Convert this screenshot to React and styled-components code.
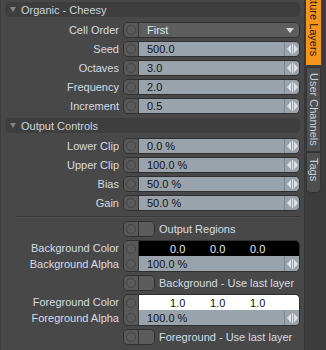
import React from "react";
import styled, { createGlobalStyle } from "styled-components";

const Global = createGlobalStyle`
  html, body { margin: 0; padding: 0; background: #3c3c3c; }
  body { font-family: "Liberation Sans", Arial, sans-serif; font-size: 11px; }
  * { box-sizing: border-box; }
`;

const Root = styled.div`
  display: flex;
  width: 326px;
  height: 350px;
  overflow: hidden;
  background: #3c3c3c;
`;

const Panel = styled.div`
  width: 305px;
  height: 350px;
  flex: none;
  background: #484848;
  border-left: 1px solid #3d3d3d;
  border-right: 1px solid #363636;
  padding: 2px 4px 0 4px;
  display: flex;
  flex-direction: column;
`;

const Header = styled.div`
  height: 15px;
  border-radius: 5px;
  background: #3e3e3e;
  display: flex;
  align-items: center;
  gap: 5px;
  padding-left: 5px;
  color: #cbd5df;
  margin-top: ${(p) => p.$mt || 0}px;
  margin-bottom: 5px;
  flex: none;
`;

const Caret = styled.span`
  width: 0;
  height: 0;
  border-left: 3px solid transparent;
  border-right: 3px solid transparent;
  border-top: 5px solid #858585;
`;

const Row = styled.div`
  display: grid;
  grid-template-columns: 114px 1fr;
  column-gap: 4px;
  height: 16px;
  align-items: center;
  margin-bottom: 3px;
  flex: none;
`;

const PairRow = styled.div`
  display: grid;
  grid-template-columns: 114px 1fr;
  grid-template-rows: 16px 16px;
  column-gap: 4px;
  align-items: center;
  margin-bottom: 3px;
  flex: none;
`;

const Label = styled.div`
  grid-column: 1;
  text-align: right;
  color: #d5dce4;
  white-space: nowrap;
  line-height: 16px;
`;

const Control = styled.div`
  display: flex;
  height: 16px;
  border: 1px solid #2f2f2f;
  border-radius: 5px;
  overflow: hidden;
`;

const Cap = styled.div`
  width: 15px;
  flex: none;
  background: #585858;
  border-right: 1px solid #343434;
  display: flex;
  flex-direction: column;
  align-items: center;
  justify-content: space-around;
`;

const Radio = styled.span`
  width: 10px;
  height: 10px;
  border-radius: 50%;
  border: 1px solid #454545;
  background: #5a5a5a;
`;

const Field = styled.div`
  flex: 1;
  display: flex;
  align-items: center;
  padding-left: 8px;
  background: ${(p) => p.$bg || "#99a3ac"};
  color: ${(p) => p.$fg || "#141414"};
  white-space: nowrap;
`;

const Spin = styled.div`
  width: 15px;
  flex: none;
  display: flex;
  align-items: center;
  justify-content: center;
  background: #99a3ac;
  border-left: 1px solid #7d8790;
`;

const Arrow = styled.span`
  margin-left: auto;
  margin-right: 5px;
  width: 0;
  height: 0;
  border-left: 4px solid transparent;
  border-right: 4px solid transparent;
  border-top: 5px solid #d8d8d8;
`;

const PairControl = styled.div`
  grid-column: 2;
  grid-row: 1 / span 2;
  height: 32px;
  display: grid;
  grid-template-columns: 15px 1fr;
  grid-template-rows: 15px 15px;
  border: 1px solid #2f2f2f;
  border-radius: 5px;
  overflow: hidden;
`;

const PairCap = styled(Cap)`
  grid-row: 1 / span 2;
`;

const ColorField = styled.div`
  display: flex;
  align-items: center;
  padding-left: 31px;
  background: ${(p) => p.$bg};
  color: ${(p) => p.$fg};
`;

const ColorVal = styled.span`
  width: 40px;
  flex: none;
`;

const AlphaField = styled.div`
  display: flex;
`;

const Separator = styled.div`
  height: 1px;
  margin: 2px 0 4px 11px;
  background: #393939;
  box-shadow: 0 1px 0 #505050;
  flex: none;
`;

const ToggleWrap = styled.div`
  grid-column: 2;
  display: flex;
  align-items: center;
  gap: 4px;
  color: #d5dce4;
  white-space: nowrap;
`;

const Toggle = styled.div`
  width: 32px;
  height: 16px;
  display: flex;
  border: 1px solid #2f2f2f;
  border-radius: 5px;
  overflow: hidden;
  flex: none;
`;

const ToggleHalf = styled.div`
  flex: 1;
  background: #5c5c5c;
`;

const TabStrip = styled.div`
  width: 21px;
  flex: none;
  display: flex;
  flex-direction: column;
  padding-left: 1px;
  background: #3c3c3c;
`;

const Tab = styled.div`
  width: 15px;
  height: ${(p) => p.$h}px;
  margin-top: ${(p) => p.$mt || 0}px;
  flex: none;
  display: flex;
  flex-direction: column;
  align-items: center;
  justify-content: ${(p) => (p.$end ? "flex-end" : "flex-start")};
  padding: ${(p) => (p.$end ? "0 0 9px 0" : "5px 0 0 0")};
  overflow: hidden;
  background: ${(p) => (p.$active ? "#f5951c" : "#4f4f4f")};
  color: ${(p) => (p.$active ? "#231a10" : "#c5d0dc")};
  border: ${(p) => (p.$active ? "none" : "1px solid #343434")};
  border-radius: ${(p) => (p.$last ? "0 0 5px 5px" : "0")};
`;

const TabText = styled.span`
  writing-mode: vertical-rl;
  white-space: nowrap;
  font-size: 11px;
  flex: none;
`;

const SpinIcon = () => (
  <svg width="11" height="10" viewBox="0 0 11 10">
    <polygon points="4,0.5 4,9.5 0,5" fill="#dfe3e7" />
    <rect x="5" y="0" width="1" height="10" fill="#dfe3e7" />
    <polygon points="7,0.5 7,9.5 11,5" fill="#dfe3e7" />
  </svg>
);

const NumRow = ({ label, value }) => (
  <Row>
    <Label>{label}</Label>
    <Control>
      <Cap>
        <Radio />
      </Cap>
      <Field>{value}</Field>
      <Spin>
        <SpinIcon />
      </Spin>
    </Control>
  </Row>
);

const ToggleRow = ({ label }) => (
  <Row>
    <ToggleWrap>
      <Toggle>
        <Cap>
          <Radio />
        </Cap>
        <ToggleHalf />
      </Toggle>
      {label}
    </ToggleWrap>
  </Row>
);

const ColorPair = ({ prefix, bg, fg, val }) => (
  <PairRow>
    <Label>{prefix} Color</Label>
    <Label>{prefix} Alpha</Label>
    <PairControl>
      <PairCap>
        <Radio />
        <Radio />
      </PairCap>
      <ColorField $bg={bg} $fg={fg}>
        <ColorVal>{val}</ColorVal>
        <ColorVal>{val}</ColorVal>
        <ColorVal>{val}</ColorVal>
      </ColorField>
      <AlphaField>
        <Field>100.0 %</Field>
        <Spin>
          <SpinIcon />
        </Spin>
      </AlphaField>
    </PairControl>
  </PairRow>
);

export default function App() {
  return (
    <Root>
      <Global />
      <Panel>
        <Header>
          <Caret />
          Organic - Cheesy
        </Header>
        <Row>
          <Label>Cell Order</Label>
          <Control>
            <Cap>
              <Radio />
            </Cap>
            <Field $bg="#5d5d5d" $fg="#dde3ea">
              First
              <Arrow />
            </Field>
          </Control>
        </Row>
        <NumRow label="Seed" value="500.0" />
        <NumRow label="Octaves" value="3.0" />
        <NumRow label="Frequency" value="2.0" />
        <NumRow label="Increment" value="0.5" />
        <Header $mt={1}>
          <Caret />
          Output Controls
        </Header>
        <NumRow label="Lower Clip" value="0.0 %" />
        <NumRow label="Upper Clip" value="100.0 %" />
        <NumRow label="Bias" value="50.0 %" />
        <NumRow label="Gain" value="50.0 %" />
        <Separator />
        <ToggleRow label="Output Regions" />
        <ColorPair prefix="Background" bg="#000000" fg="#e8ecf0" val="0.0" />
        <ToggleRow label="Background - Use last layer" />
        <ColorPair prefix="Foreground" bg="#ffffff" fg="#111111" val="1.0" />
        <ToggleRow label="Foreground - Use last layer" />
      </Panel>
      <TabStrip>
        <Tab $h={65} $active $end>
          <TabText>Texture Layers</TabText>
        </Tab>
        <Tab $h={85} $mt={2}>
          <TabText>User Channels</TabText>
        </Tab>
        <Tab $h={41} $last>
          <TabText>Tags</TabText>
        </Tab>
      </TabStrip>
    </Root>
  );
}
